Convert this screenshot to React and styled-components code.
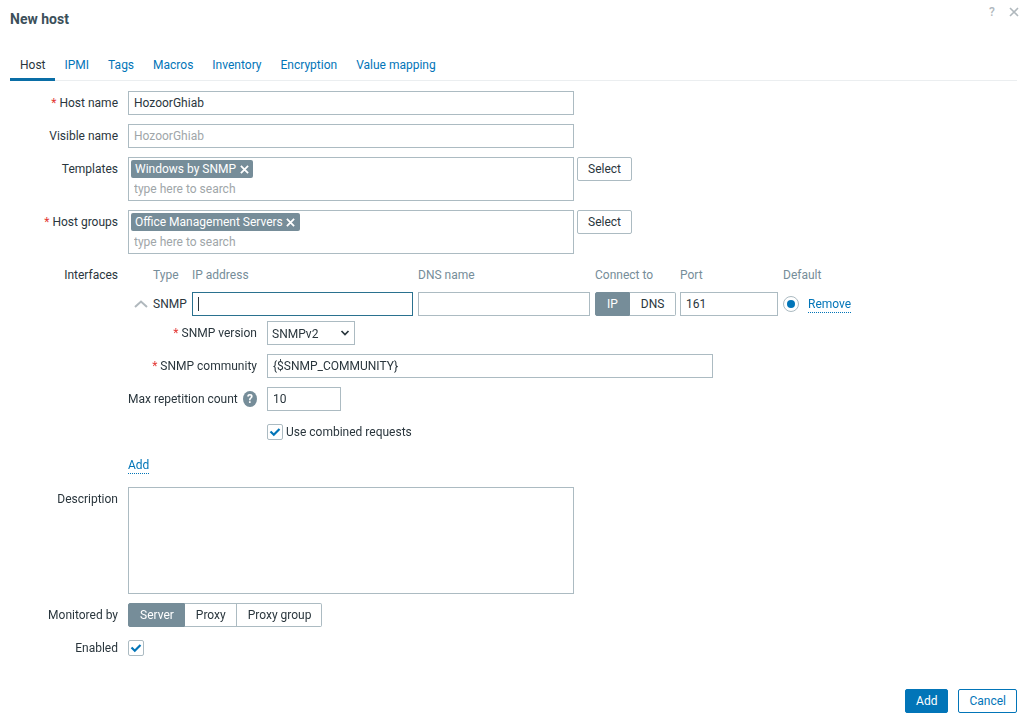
import React, { useState } from "react";
import styled, { createGlobalStyle, css } from "styled-components";

const color = {
  text: "#2a363d",
  title: "#3c4f5a",
  muted: "#768d99",
  faint: "#a0a6a9",
  icon: "#b0b8bd",
  border: "#acbbc2",
  line: "#ebeef0",
  link: "#0275b8",
  focus: "#2a718f",
  required: "#e33734",
};

const GlobalStyle = createGlobalStyle`
  *, *::before, *::after { box-sizing: border-box; }
  body {
    margin: 0;
    background: #fff;
    color: ${color.text};
    font: 12px/24px Roboto, "Liberation Sans", sans-serif;
  }
  button, input, select, textarea { font: inherit; color: inherit; margin: 0; }
`;

const Dialog = styled.main`
  padding: 6px 7px 6px 10px;
`;

const DialogHeader = styled.header`
  display: flex;
  justify-content: space-between;
  align-items: flex-start;
  height: 44px;
  margin-right: -2px;
`;

const Title = styled.h1`
  margin: 0;
  color: ${color.title};
  font-size: 14px;
  font-weight: 700;
  line-height: 26px;
`;

const HeaderActions = styled.div`
  display: flex;
  gap: 12px;
`;

const IconButton = styled.button`
  display: grid;
  place-items: center;
  width: 10px;
  height: 12px;
  padding: 0;
  border: 0;
  background: none;
  color: ${(p) => p.$color || color.icon};
  font-weight: 500;
  line-height: 12px;
  cursor: pointer;
`;

const Tabs = styled.nav`
  display: flex;
  border-bottom: 1px solid ${color.line};
`;

const Tab = styled.a`
  height: 31px;
  margin-bottom: -1px;
  padding: 3px 9px 0 10px;
  border-bottom: 3px solid ${(p) => (p.$active ? "#0a6ea6" : "transparent")};
  color: ${(p) => (p.$active ? color.text : color.link)};
  text-decoration: none;
`;

const Form = styled.form`
  display: grid;
  gap: 9px;
  padding-top: 10px;
`;

const Row = styled.div`
  display: grid;
  grid-template-columns: ${(p) => (p.$nested ? "129px" : "108px")} minmax(0, 1fr);
  column-gap: 10px;
  align-items: start;
`;

const Label = styled.label`
  display: flex;
  align-items: center;
  justify-content: flex-end;
  height: 24px;
  white-space: nowrap;
`;

const Required = styled.span`
  margin-right: 3px;
  color: ${color.required};
`;

const Inline = styled.div`
  display: flex;
  align-items: flex-start;
  gap: 3px;
`;

const field = css`
  border: 1px solid ${color.border};
  border-radius: 0;
  background: #fff;
  outline: 0;
  &::placeholder { color: ${color.faint}; opacity: 1; }
  &:focus { border-color: ${color.focus}; }
`;

const TextInput = styled.input`
  ${field}
  display: block;
  width: ${(p) => p.$width || "446px"};
  max-width: 100%;
  height: 24px;
  padding: 0 5px;
`;

const TextArea = styled.textarea`
  ${field}
  display: block;
  width: 446px;
  max-width: 100%;
  height: 107px;
  padding: 4px 5px;
  resize: vertical;
  &::-webkit-resizer { display: none; }
`;

const MultiSelect = styled.div`
  display: flex;
  flex-direction: column;
  align-items: flex-start;
  width: 446px;
  height: 44px;
  padding: 2px;
  border: 1px solid ${color.border};
`;

const Chip = styled.span`
  display: flex;
  align-items: center;
  gap: 3px;
  height: 18px;
  padding: 0 4px;
  border-radius: 2px;
  background: ${color.muted};
  color: #fff;
  line-height: 18px;
`;

const ChipInput = styled.input`
  width: 100%;
  height: 20px;
  padding: 1px 3px 0;
  border: 0;
  outline: 0;
  background: none;
  &::placeholder { color: ${color.faint}; opacity: 1; }
`;

const Button = styled.button`
  height: 24px;
  padding: 0 10px;
  border: 1px solid ${(p) => (p.$kind ? color.link : color.border)};
  border-radius: 2px;
  background: ${(p) => (p.$kind === "primary" ? color.link : "#fff")};
  color: ${(p) => (p.$kind === "primary" ? "#fff" : p.$kind ? color.link : color.text)};
  line-height: 22px;
  cursor: pointer;
`;

const LinkButton = styled.button`
  justify-self: start;
  height: 16px;
  margin: 4px 0;
  padding: 0;
  border: 0;
  border-bottom: 1px dotted ${color.link};
  background: none;
  color: ${color.link};
  line-height: 15px;
  cursor: pointer;
`;

const InterfaceTable = styled.table`
  width: 725px;
  border-collapse: collapse;
  table-layout: fixed;
  th, td { padding: 0; text-align: left; vertical-align: top; white-space: nowrap; }
  th { height: 29px; color: ${color.muted}; font-weight: 400; }
`;

const Center = styled.div`
  display: flex;
  align-items: center;
  height: 24px;
  padding-left: ${(p) => p.$indent || "0"};
`;

/* The text cursor is painted as a background bar while the field is empty. */
const CursorInput = styled(TextInput)`
  border-color: ${color.focus};
  caret-color: transparent;
  &:placeholder-shown {
    background: linear-gradient(${color.text}, ${color.text}) 5px center / 1px 14px no-repeat #fff;
  }
  &:not(:placeholder-shown) { caret-color: auto; }
`;

const SnmpDetails = styled.div`
  display: grid;
  gap: 9px;
  padding: 4px 0 10px;
`;

const Segmented = styled.div`
  display: inline-flex;
  height: 24px;
  vertical-align: top;
`;

const Segment = styled.label`
  display: block;
  padding: 0 ${(p) => p.$pad || "10px 0 11px"};
  border: 1px solid ${(p) => (p.$active ? color.muted : color.border)};
  border-left-width: ${(p) => (p.$first ? "1px" : "0")};
  border-radius: ${(p) => (p.$first ? "2px 0 0 2px" : p.$last ? "0 2px 2px 0" : "0")};
  background: ${(p) => (p.$active ? color.muted : "#fff")};
  color: ${(p) => (p.$active ? "#fff" : color.text)};
  line-height: 22px;
  cursor: pointer;
  input { position: absolute; opacity: 0; pointer-events: none; }
`;

const Stack = styled.span`
  display: inline-grid;
  align-items: center;
  vertical-align: top;
  > * { grid-area: 1 / 1; }
  > svg { pointer-events: none; }
`;

const CheckInput = styled.input`
  appearance: none;
  width: 16px;
  height: 16px;
  border: 1px solid ${color.border};
  border-radius: ${(p) => (p.type === "radio" ? "50%" : "2px")};
  background: #fff;
  &:not(:checked) + svg { visibility: hidden; }
`;

const CheckLabel = styled.label`
  display: flex;
  align-items: center;
  gap: 3px;
  height: 24px;
`;

const Select = styled.select`
  ${field}
  appearance: none;
  width: 88px;
  height: 24px;
  padding: 0 4px;
`;

const SelectArrow = styled.svg`
  justify-self: end;
  margin-right: 5px;
`;

const HelpBadge = styled.button`
  width: 16px;
  height: 16px;
  margin-left: 5px;
  padding: 0;
  border: 0;
  border-radius: 50%;
  background: ${color.muted};
  color: #fff;
  font-weight: 700;
  line-height: 16px;
`;

const Footer = styled.footer`
  display: flex;
  justify-content: flex-end;
  gap: 10px;
  padding-top: 20px;
`;

function Cross({ size, width }) {
  return (
    <svg width={size} height={size} viewBox="0 0 10 10" fill="none" stroke="currentColor" strokeWidth={width}>
      <path d="M1 1l8 8M9 1l-8 8" />
    </svg>
  );
}

function Check({ id }) {
  return (
    <Stack>
      <CheckInput id={id} type="checkbox" defaultChecked />
      <svg width="16" height="16" viewBox="0 0 16 16" fill="none" stroke={color.link} strokeWidth="2.2">
        <path d="M3.500 7.500l3.300 3.200 5.700-5.700" />
      </svg>
    </Stack>
  );
}

function Field({ label, htmlFor, required, nested, help, children }) {
  return (
    <Row $nested={nested}>
      <Label htmlFor={htmlFor} as={htmlFor ? "label" : "span"}>
        {required && <Required>*</Required>}
        {label}
        {help && <HelpBadge type="button" aria-label="Help">?</HelpBadge>}
      </Label>
      <div>{children}</div>
    </Row>
  );
}

function Multi({ id, item }) {
  return (
    <Inline>
      <MultiSelect>
        <Chip>
          {item}
          <IconButton type="button" $color="#fff" aria-label={`Remove ${item}`}>
            <Cross size={9} width={2} />
          </IconButton>
        </Chip>
        <ChipInput id={id} placeholder="type here to search" />
      </MultiSelect>
      <Button type="button">Select</Button>
    </Inline>
  );
}

function Segments({ name, options, pad }) {
  const [value, setValue] = useState(options[0]);
  return (
    <Segmented role="radiogroup" aria-label={name}>
      {options.map((option, i) => (
        <Segment
          key={option}
          $active={option === value}
          $first={i === 0}
          $last={i === options.length - 1}
          $pad={pad}
        >
          <input type="radio" name={name} checked={option === value} onChange={() => setValue(option)} />
          {option}
        </Segment>
      ))}
    </Segmented>
  );
}

const tabs = ["Host", "IPMI", "Tags", "Macros", "Inventory", "Encryption", "Value mapping"];
const columns = [25, 39, 226, 177, 85, 103, 25, 45];

export default function App() {
  return (
    <Dialog>
      <GlobalStyle />
      <DialogHeader>
        <Title>New host</Title>
        <HeaderActions>
          <IconButton type="button" aria-label="Help">?</IconButton>
          <IconButton type="button" aria-label="Close"><Cross size={10} width={1.6} /></IconButton>
        </HeaderActions>
      </DialogHeader>

      <Tabs>
        {tabs.map((tab, i) => (
          <Tab key={tab} href="#" $active={i === 0}>{tab}</Tab>
        ))}
      </Tabs>

      <Form onSubmit={(e) => e.preventDefault()}>
        <Field label="Host name" htmlFor="host" required>
          <TextInput id="host" defaultValue="HozoorGhiab" />
        </Field>
        <Field label="Visible name" htmlFor="visible">
          <TextInput id="visible" placeholder="HozoorGhiab" />
        </Field>
        <Field label="Templates" htmlFor="templates">
          <Multi id="templates" item="Windows by SNMP" />
        </Field>
        <Field label="Host groups" htmlFor="groups" required>
          <Multi id="groups" item="Office Management Servers" />
        </Field>

        <Field label="Interfaces">
          <InterfaceTable>
            <colgroup>
              {columns.map((w, i) => <col key={i} width={w} />)}
            </colgroup>
            <thead>
              <tr>
                <th />
                <th>Type</th>
                <th>IP address</th>
                <th>DNS name</th>
                <th>Connect to</th>
                <th>Port</th>
                <th colSpan={2}>Default</th>
              </tr>
            </thead>
            <tbody>
              <tr>
                <td>
                  <Center $indent="6px">
                    <IconButton type="button" aria-label="Collapse">
                      <svg width="14" height="8" viewBox="0 0 14 8" fill="none" stroke="currentColor" strokeWidth="2">
                        <path d="M1 7l6-5.500L13 7" />
                      </svg>
                    </IconButton>
                  </Center>
                </td>
                <td>SNMP</td>
                <td><CursorInput $width="221px" aria-label="IP address" placeholder=" " autoFocus /></td>
                <td><TextInput $width="172px" aria-label="DNS name" /></td>
                <td><Segments name="Connect to" options={["IP", "DNS"]} pad="11px" /></td>
                <td><TextInput $width="98px" aria-label="Port" defaultValue="161" /></td>
                <td>
                  <Center>
                    <Stack>
                      <CheckInput type="radio" aria-label="Default interface" defaultChecked />
                      <svg width="16" height="16" viewBox="0 0 16 16"><circle cx="8" cy="8" r="4" fill={color.link} /></svg>
                    </Stack>
                  </Center>
                </td>
                <td><LinkButton type="button">Remove</LinkButton></td>
              </tr>
              <tr>
                <td colSpan={8}>
                  <SnmpDetails>
                    <Field nested required label="SNMP version" htmlFor="version">
                      <Stack>
                        <Select id="version" defaultValue="SNMPv2">
                          <option>SNMPv1</option>
                          <option>SNMPv2</option>
                          <option>SNMPv3</option>
                        </Select>
                        <SelectArrow width="10" height="8" viewBox="0 0 10 8" fill="none" stroke={color.text} strokeWidth="1.7">
                          <path d="M1.500 2L5 5.500L8.500 2" />
                        </SelectArrow>
                      </Stack>
                    </Field>
                    <Field nested required label="SNMP community" htmlFor="community">
                      <TextInput id="community" defaultValue="{$SNMP_COMMUNITY}" />
                    </Field>
                    <Field nested help label="Max repetition count" htmlFor="repetition">
                      <TextInput id="repetition" $width="74px" defaultValue="10" />
                    </Field>
                    <Field nested>
                      <CheckLabel>
                        <Check />
                        Use combined requests
                      </CheckLabel>
                    </Field>
                  </SnmpDetails>
                </td>
              </tr>
            </tbody>
          </InterfaceTable>
          <Center>
            <LinkButton type="button">Add</LinkButton>
          </Center>
        </Field>

        <Field label="Description" htmlFor="description">
          <TextArea id="description" />
        </Field>
        <Field label="Monitored by">
          <Segments name="Monitored by" options={["Server", "Proxy", "Proxy group"]} />
        </Field>
        <Field label="Enabled" htmlFor="enabled">
          <Center><Check id="enabled" /></Center>
        </Field>

        <Footer>
          <Button type="submit" $kind="primary">Add</Button>
          <Button type="button" $kind="outline">Cancel</Button>
        </Footer>
      </Form>
    </Dialog>
  );
}
